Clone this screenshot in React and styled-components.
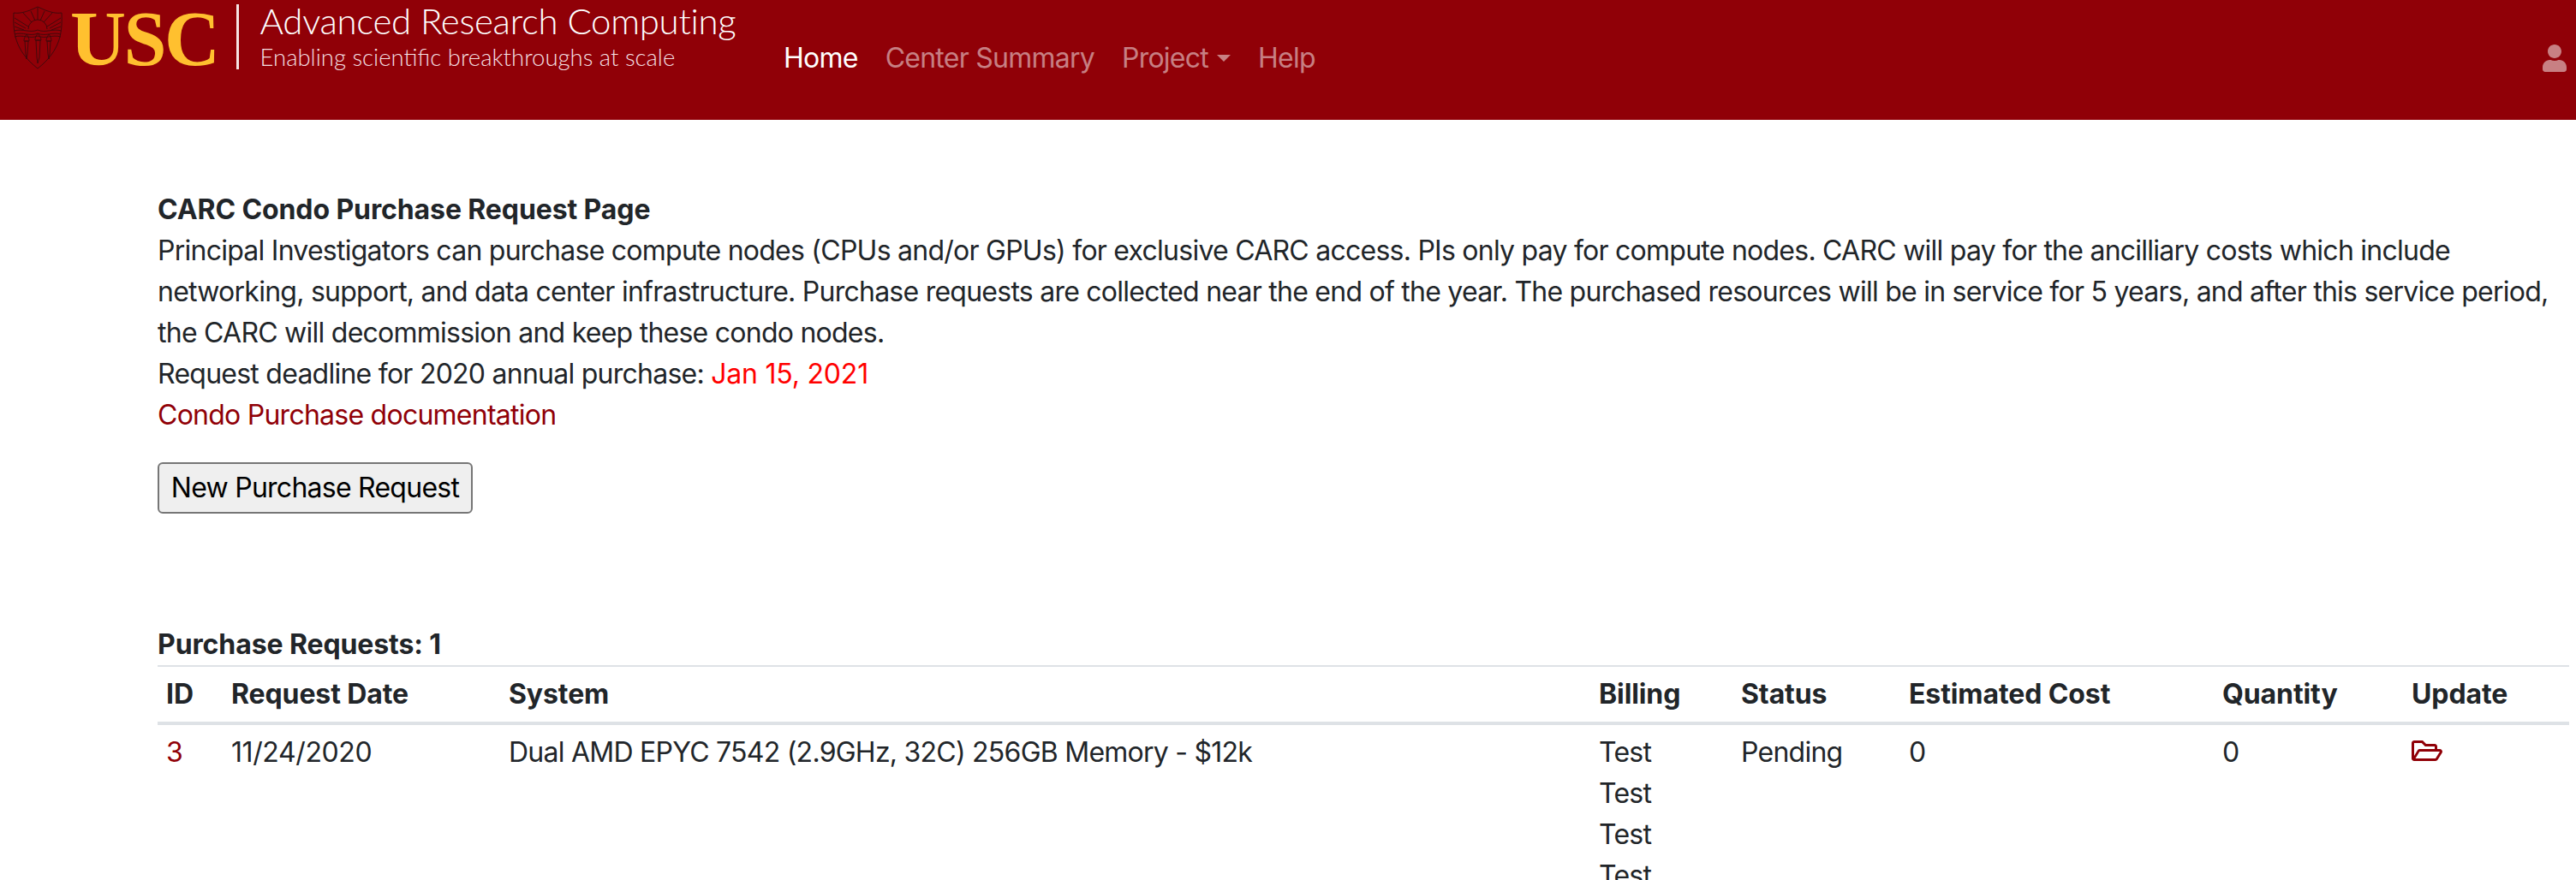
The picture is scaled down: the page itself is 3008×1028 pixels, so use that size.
import React from "react"
import styled, { createGlobalStyle } from "styled-components"
import { FaUser, FaRegFolderOpen } from "react-icons/fa"

const GlobalStyle = createGlobalStyle`
  html, body {
    margin: 0;
    height: 100%;
    overflow: hidden;
    background: #fff;
  }
  body {
    font-family: Inter, "Liberation Sans", sans-serif;
    font-size: 32px;
    line-height: 48px;
    letter-spacing: -0.75px;
    color: #212529;
  }
`

const Seal = () => (
  <SealSvg viewBox="0 0 58 74" fill="none" stroke="#3a0a0c" strokeWidth="0.9">
    <path d="M1 8 C8 9 14 7 20 5 L29 1 L38 5 C44 7 50 9 57 8 C58 30 56 52 29 73 C2 52 0 30 1 8 Z" />
    <path d="M18 27 A11 11 0 0 1 40 27" />
    <path d="M2 14 L18 24 M2 19 L15 26 M2 24 L13 28 M12 8 L22 19 M21 6 L26 17 M29 2 L29 16 M37 6 L32 17 M46 8 L36 19 M56 14 L40 24 M56 19 L43 26 M56 24 L45 28" />
    <path d="M1 29 C12 26 20 32 29 28 C38 32 46 26 57 29 M2 33 C12 30 20 36 29 32 C38 36 46 30 56 33 M2 36 C12 33 20 39 29 35 C38 39 46 33 56 36" />
    <path d="M14 41 L18 41 L17 56 L16 62 L15 56 Z M27 40 L32 40 L31 60 L29 67 L28 60 Z M40 41 L44 41 L43 56 L42 62 L41 56 Z" />
    <path d="M13 41 C13 36 16 34 16 33 C18 35 19 38 19 41 Z M26 40 C26 35 29 33 29 32 C31 34 33 37 33 40 Z M39 41 C39 36 42 34 42 33 C44 35 45 38 45 41 Z" />
  </SealSvg>
)

const rows = [
  { id: 3, date: "11/24/2020", system: "Dual AMD EPYC 7542 (2.9GHz, 32C) 256GB Memory - $12k", billing: ["Test", "Test", "Test", "Test"], status: "Pending", cost: 0, quantity: 0 },
]

const App = () => (
  <>
    <GlobalStyle />
    <Header>
      <Brand>
        <Seal />
        <Usc>USC</Usc>
        <Divider />
        <BrandText>
          <BrandTitle>Advanced Research Computing</BrandTitle>
          <BrandSub>Enabling scientific breakthroughs at scale</BrandSub>
        </BrandText>
      </Brand>
      <Nav>
        <NavLink $active>Home</NavLink>
        <NavLink>Center Summary</NavLink>
        <NavLink>
          Project
          <Caret />
        </NavLink>
        <NavLink>Help</NavLink>
      </Nav>
      <UserButton>
        <FaUser size={32} />
      </UserButton>
    </Header>
    <Main>
      <Intro>
        <PageTitle>CARC Condo Purchase Request Page</PageTitle>
        <Line>Principal Investigators can purchase compute nodes (CPUs and/or GPUs) for exclusive CARC access. PIs only pay for compute nodes. CARC will pay for the ancilliary costs which include</Line>
        <Line>networking, support, and data center infrastructure. Purchase requests are collected near the end of the year. The purchased resources will be in service for 5 years, and after this service period,</Line>
        <Line>the CARC will decommission and keep these condo nodes.</Line>
        <Line>
          Request deadline for 2020 annual purchase: <Deadline>Jan 15, 2021</Deadline>
        </Line>
        <RedLink>Condo Purchase documentation</RedLink>
      </Intro>
      <NewButton>New Purchase Request</NewButton>
      <TableTitle>Purchase Requests: 1</TableTitle>
      <Table>
        <colgroup>
          <col width="76" />
          <col width="324" />
          <col width="1273" />
          <col width="166" />
          <col width="196" />
          <col width="366" />
          <col width="221" />
          <col width="194" />
        </colgroup>
        <thead>
          <tr>
            <Th>ID</Th>
            <Th>Request Date</Th>
            <Th>System</Th>
            <Th>Billing</Th>
            <Th>Status</Th>
            <Th>Estimated Cost</Th>
            <Th>Quantity</Th>
            <Th>Update</Th>
          </tr>
        </thead>
        <tbody>
          {rows.map(r => (
            <tr key={r.id}>
              <Td><RedLink>{r.id}</RedLink></Td>
              <Td><DateText>{r.date}</DateText></Td>
              <Td>{r.system}</Td>
              <Td>
                {r.billing.map((b, i) => (
                  <Line key={i}>{b}</Line>
                ))}
              </Td>
              <Td>{r.status}</Td>
              <Td>{r.cost}</Td>
              <Td>{r.quantity}</Td>
              <Td><FolderLink><FaRegFolderOpen size={36} /></FolderLink></Td>
            </tr>
          ))}
        </tbody>
      </Table>
    </Main>
  </>
)

const Header = styled.header`
  height: 140px;
  background: #900007;
  display: flex;
  align-items: flex-start;
`
const Brand = styled.div`
  display: flex;
  align-items: flex-start;
  padding: 5px 0 0 15px;
  width: 901px;
  flex-shrink: 0;
  box-sizing: border-box;
`
const SealSvg = styled.svg`
  width: 58px;
  height: 74px;
  margin-top: 2px;
  flex-shrink: 0;
`
const Usc = styled.div`
  font-family: "Liberation Serif", serif;
  font-weight: 700;
  font-size: 90px;
  line-height: 76px;
  color: #ffc02f;
  margin: 3px 0 0 9px;
  letter-spacing: -2.5px;
  flex-shrink: 0;
`
const Divider = styled.div`
  width: 3px;
  height: 76px;
  background: #f5e4e4;
  margin-left: 21px;
  flex-shrink: 0;
`
const BrandText = styled.div`
  margin-left: 25px;
  margin-top: -6px;
  font-family: Lato, sans-serif;
  font-weight: 300;
  letter-spacing: 0;
  color: #fff;
`
const BrandTitle = styled.div`
  font-size: 42px;
  line-height: 50px;
  letter-spacing: -0.3px;
  white-space: nowrap;
`
const BrandSub = styled.div`
  font-size: 27.5px;
  line-height: 36px;
  color: #f3dfe0;
  white-space: nowrap;
`
const Nav = styled.nav`
  display: flex;
  gap: 32px;
  margin-top: 44px;
  margin-left: 14px;
`
const NavLink = styled.a`
  color: ${props => (props.$active ? "#fff" : "rgba(255, 255, 255, 0.5)")};
  display: flex;
  align-items: center;
`
const Caret = styled.span`
  width: 0;
  height: 0;
  margin-left: 10px;
  border-top: 8px solid currentColor;
  border-left: 8px solid transparent;
  border-right: 8px solid transparent;
`
const UserButton = styled.div`
  margin-left: auto;
  margin-top: 52px;
  margin-right: 9px;
  color: rgba(255, 255, 255, 0.5);
  line-height: 0;
`
const Main = styled.main`
  padding: 81px 10px 0 184px;
`
const Intro = styled.div`
  white-space: nowrap;
`
const PageTitle = styled.div`
  font-weight: 700;
  letter-spacing: -0.1px;
`
const Line = styled.div``
const Deadline = styled.span`
  color: #ff0000;
  letter-spacing: -0.2px;
`
const DateText = styled.span`
  letter-spacing: -0.4px;
`
const RedLink = styled.a`
  color: #900007;
  display: block;
`
const NewButton = styled.button`
  display: block;
  margin-top: 31px;
  width: 368px;
  height: 60px;
  padding: 0;
  box-sizing: border-box;
  background: #efefef;
  border: 2px solid #767676;
  border-radius: 6px;
  font: inherit;
  letter-spacing: inherit;
  color: #000;
`
const TableTitle = styled.div`
  font-weight: 700;
  letter-spacing: -0.1px;
  margin-top: 129px;
`
const Table = styled.table`
  width: 2816px;
  table-layout: fixed;
  border-collapse: collapse;
`
const Th = styled.th`
  text-align: left;
  padding: 8px 10px;
  box-sizing: border-box;
  border-top: 2px solid #dee2e6;
  border-bottom: 4px solid #dee2e6;
  font-weight: 700;
  letter-spacing: -0.1px;
`
const Td = styled.td`
  vertical-align: top;
  padding: 8px 10px;
`
const FolderLink = styled.a`
  color: #900007;
  display: block;
  line-height: 0;
  padding-top: 4px;
`

export default App
